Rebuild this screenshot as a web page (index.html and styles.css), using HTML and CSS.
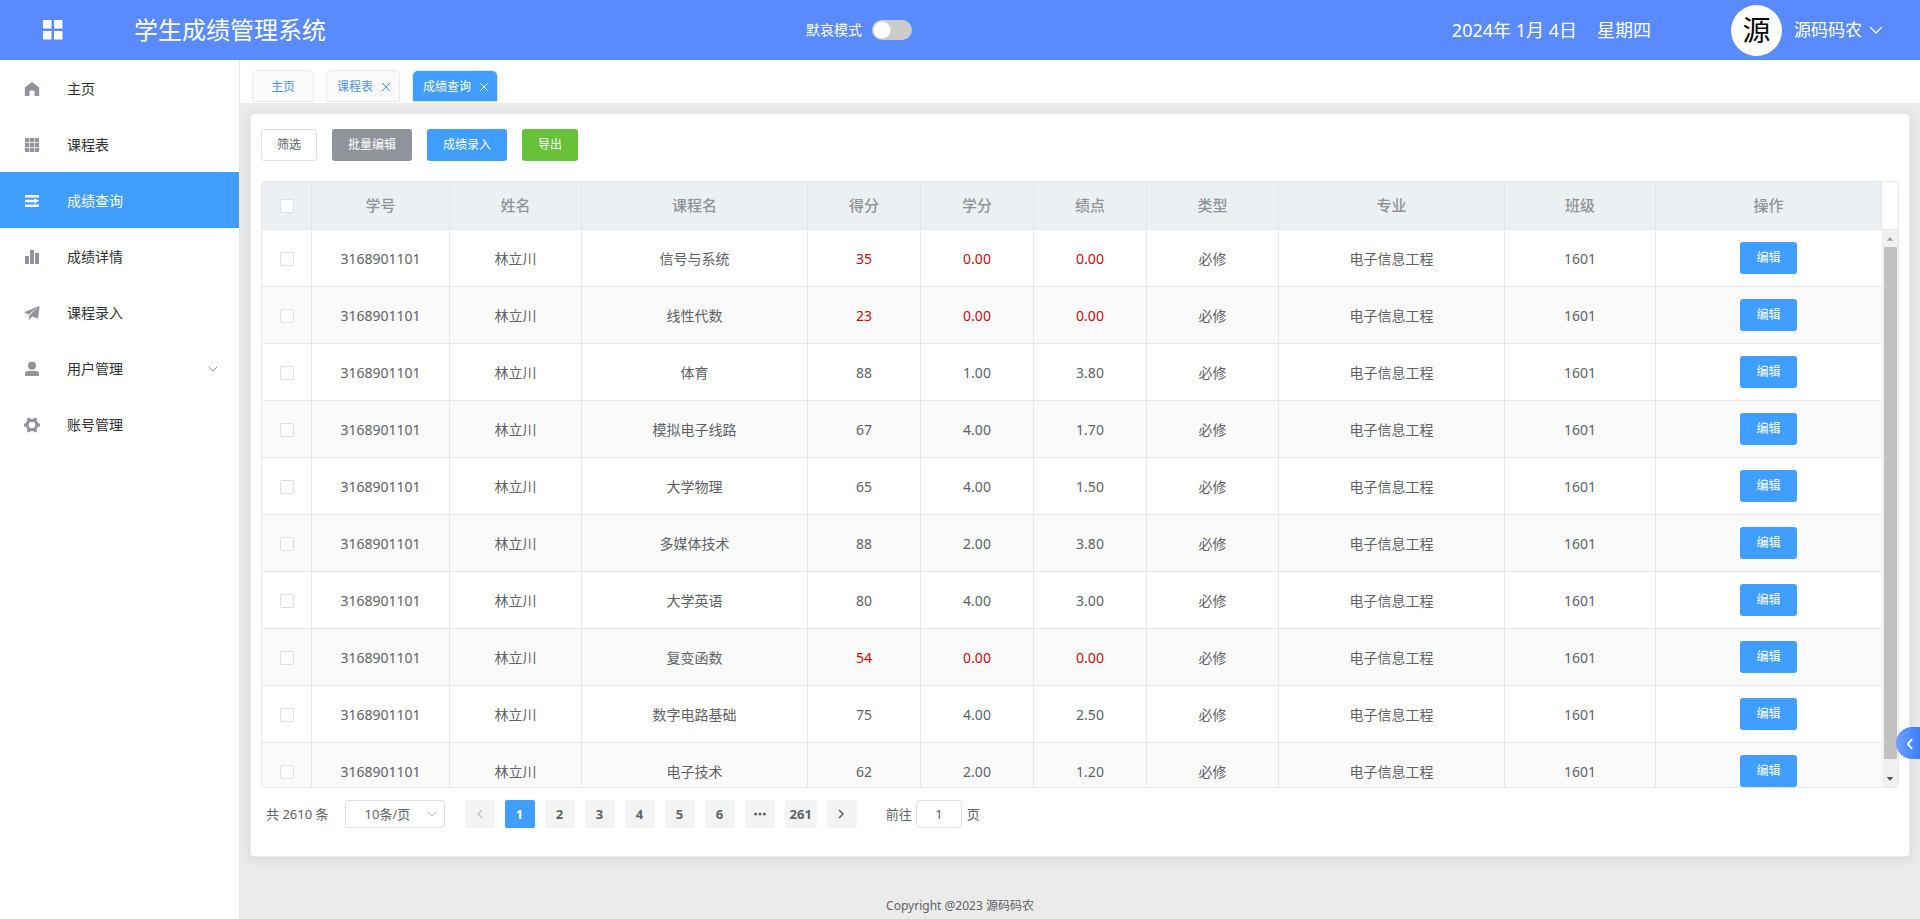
FILE: index.html
```
<!DOCTYPE html>
<html lang="zh-CN">
<head>
<meta charset="utf-8">
<title>学生成绩管理系统</title>
<link rel="stylesheet" href="styles.css">
</head>
<body>
<div class="app">
  <header class="topbar">
    <button class="icon-button menu-toggle" type="button" aria-label="菜单">
      <svg width="20" height="20" viewBox="0 0 20 20" fill="currentColor"><path d="M0 0h8.500v8.500H0zM11 0h8.500v8.500H11zM0 11h8.500v8.500H0zM11 11h8.500v8.500H11z"/></svg>
    </button>
    <h1 class="brand">学生成绩管理系统</h1>
    <label class="mode">默哀模式<input class="switch" type="checkbox" role="switch"></label>
    <div class="date"><span>2024年 1月 4日</span><span>星期四</span></div>
    <button class="icon-button user" type="button">
      <span class="avatar">源</span>
      <span class="user-name">源码码农</span>
      <svg width="14" height="8" viewBox="0 0 14 8" fill="none" stroke="currentColor" stroke-width="1.3"><path d="M1 1l6 6 6-6"/></svg>
    </button>
  </header>
  <div class="shell">
    <nav class="sidebar">
      <a class="nav-item" href="#"><svg class="nav-icon" viewBox="0 0 16 16"><path d="M8 .8L15.200 6.500V15H10.500V9.500h-5V15H.8V6.500z"/></svg>主页</a>
      <a class="nav-item" href="#"><svg class="nav-icon" viewBox="0 0 16 16"><path d="M1 1h4.200v4.200H1zM5.900 1h4.200v4.200H5.900zM10.800 1H15v4.200h-4.200zM1 5.900h4.200v4.200H1zM5.900 5.900h4.200v4.200H5.900zM10.800 5.900H15v4.200h-4.200zM1 10.800h4.200V15H1zM5.900 10.800h4.200V15H5.900zM10.800 10.800H15V15h-4.200z"/></svg>课程表</a>
      <a class="nav-item active" href="#"><svg class="nav-icon" viewBox="0 0 16 16"><path d="M1 2h14v2.400H1zM1 6.800h9.500V5.200l4.500 2.800-4.500 2.800V9.200H1zM1 11.600h14V14H1z"/></svg>成绩查询</a>
      <a class="nav-item" href="#"><svg class="nav-icon" viewBox="0 0 16 16"><path d="M1 7h4v8H1zM6 1h4v14H6zM11 4h4v11h-4z"/></svg>成绩详情</a>
      <a class="nav-item" href="#"><svg class="nav-icon" viewBox="0 0 16 16"><path d="M15.500 .8L.3 7.300l4.400 2.200zM15.500 .8L5.200 10.500V15.500l2.500-3.500zM15.500 .8L8 11.300l6 2.400z"/></svg>课程录入</a>
      <a class="nav-item" href="#"><svg class="nav-icon" viewBox="0 0 16 16"><circle cx="8" cy="4.700" r="4"/><path d="M1 15v-2a3 3 0 0 1 3-3h8a3 3 0 0 1 3 3v2z"/></svg>用户管理<svg class="nav-arrow" width="10" height="6" viewBox="0 0 10 6"><path d="M1 1l4 4 4-4"/></svg></a>
      <a class="nav-item" href="#"><svg class="nav-icon gear" viewBox="0 0 16 16"><circle cx="8" cy="8" r="4.800"/><path d="M0 8h2.500M13.500 8H16M4 1.100l1.200 2.100M10.800 12.800l1.200 2.100M12 1.100l-1.200 2.100M5.200 12.800L4 14.900"/></svg>账号管理</a>
    </nav>
    <main class="main">
      <div class="tabs">
        <a class="tab home" href="#">主页</a>
        <a class="tab" href="#">课程表<svg class="close" viewBox="0 0 8 8"><path d="M0 0l8 8M8 0L0 8"/></svg></a>
        <a class="tab active" href="#">成绩查询<svg class="close" viewBox="0 0 8 8"><path d="M0 0l8 8M8 0L0 8"/></svg></a>
      </div>
      <section class="card">
        <div class="toolbar">
          <button class="btn plain" type="button">筛选</button>
          <button class="btn info" type="button">批量编辑</button>
          <button class="btn primary" type="button">成绩录入</button>
          <button class="btn success" type="button">导出</button>
        </div>
        <div class="table-box">
          <div class="table-scroll">
            <table class="grades">
              <colgroup><col class="c-check"><col class="c-id"><col class="c-name"><col class="c-wide"><col class="c-num"><col class="c-num"><col class="c-num"><col class="c-name"><col class="c-wide"><col class="c-class"><col class="c-wide"></colgroup>
              <thead><tr><th><input class="tick" type="checkbox" aria-label="全选"></th><th>学号</th><th>姓名</th><th>课程名</th><th>得分</th><th>学分</th><th>绩点</th><th>类型</th><th>专业</th><th>班级</th><th>操作</th></tr></thead>
              <tbody id="rows"></tbody>
            </table>
          </div>
          <div class="scroll-side" aria-hidden="true">
            <div class="gutter"></div>
            <div class="track">
              <svg class="step" viewBox="0 0 17 17"><path fill="#a3a3a3" d="M5 11h7L8.500 7z"/></svg>
              <div class="thumb"></div>
              <svg class="step" viewBox="0 0 17 17"><path fill="#505050" d="M5 7h7l-3.500 4z"/></svg>
            </div>
          </div>
        </div>
        <div class="pagination">
          <span class="total">共 2610 条</span>
          <span class="size"><select aria-label="每页条数"><option>10条/页</option></select><svg width="10" height="6" viewBox="0 0 10 6"><path d="M1 1l4 4 4-4"/></svg></span>
          <div class="pager">
            <button type="button" aria-label="上一页" disabled><svg width="7" height="10" viewBox="0 0 7 10"><path d="M6 1L2 5l4 4"/></svg></button>
            <button type="button" class="current">1</button>
            <button type="button">2</button>
            <button type="button">3</button>
            <button type="button">4</button>
            <button type="button">5</button>
            <button type="button">6</button>
            <button type="button" aria-label="更多"><svg width="12" height="4" viewBox="0 0 12 4"><g class="dots"><circle cx="1.700" cy="2" r="1.500"/><circle cx="6" cy="2" r="1.500"/><circle cx="10.300" cy="2" r="1.500"/></g></svg></button>
            <button type="button">261</button>
            <button type="button" aria-label="下一页"><svg width="7" height="10" viewBox="0 0 7 10"><path d="M1 1l4 4-4 4"/></svg></button>
          </div>
          <label class="jump">前往<input type="text" value="1">页</label>
        </div>
      </section>
      <footer class="footer">Copyright @2023 源码码农</footer>
    </main>
  </div>
  <button class="drawer" type="button" aria-label="展开"><svg width="8" height="12" viewBox="0 0 8 12"><path d="M6 1L2 6l4 5"/></svg></button>
</div>
<script src="rows.js"></script>
</body>
</html>
```

FILE: styles.css
```
* { box-sizing: border-box; }

body {
  margin: 0;
  color: #606266;
  font: 14px/20px "Noto Sans", "Noto Sans CJK SC", sans-serif;
}

button, input, select { font-family: inherit; }
a { color: inherit; text-decoration: none; }

.app {
  display: flex;
  flex-direction: column;
  height: 100vh;
  overflow: hidden;
}

/* top bar */
.topbar {
  display: flex;
  align-items: center;
  flex: none;
  height: 60px;
  padding: 0 37px 0 43px;
  background: #598bff;
  color: #fff;
}
.icon-button {
  display: flex;
  align-items: center;
  padding: 0;
  border: 0;
  background: none;
  color: inherit;
  cursor: pointer;
}
.brand {
  margin: 0 0 0 71px;
  font-size: 24px;
  font-weight: 400;
  line-height: 32px;
}
.mode {
  display: flex;
  align-items: center;
  gap: 10px;
  margin: 0 auto;
  padding-right: 60px;
}
.switch {
  appearance: none;
  width: 40px;
  height: 20px;
  margin: 0;
  border-radius: 10px;
  background: radial-gradient(circle at 10px 10px, #fff 8px, #ccc 9px);
}
.date {
  display: flex;
  gap: 20px;
  margin-right: 80px;
  font-size: 18px;
}
.avatar {
  width: 51px;
  height: 51px;
  margin-right: 12px;
  border-radius: 50%;
  background: #fff;
  color: #000;
  font-size: 28px;
  line-height: 50px;
  text-align: center;
}
.user-name {
  margin-right: 7px;
  font-size: 17px;
  line-height: 20px;
}

/* frame */
.shell {
  display: flex;
  flex: 1;
  min-height: 0;
}
.sidebar {
  flex: none;
  width: 240px;
  border-right: 1px solid #e6e6e6;
  background: #fff;
}
.nav-item {
  display: flex;
  align-items: center;
  height: 56px;
  padding: 2px 21px 0 24px;
  color: #303133;
}
.nav-item.active {
  background: #409eff;
  color: #fff;
}
.nav-icon {
  width: 16px;
  height: 16px;
  margin-right: 27px;
  fill: #909399;
}
.nav-item.active .nav-icon { fill: #fff; }
.nav-icon.gear {
  fill: none;
  stroke: #909399;
  stroke-width: 3;
}
.nav-arrow {
  margin-left: auto;
  fill: none;
  stroke: #909399;
}
.main {
  display: flex;
  flex: 1;
  flex-direction: column;
  min-width: 0;
  background: #ebebeb;
}

/* open pages */
.tabs {
  display: flex;
  gap: 12px;
  flex: none;
  height: 43px;
  padding: 10px 12px 0;
  background: #fff;
}
.tab {
  display: flex;
  align-items: center;
  gap: 9px;
  height: 32px;
  padding: 2px 9px 0 10px;
  border: 1px solid #e8eaec;
  border-radius: 6px 6px 0 0;
  background: #fafafa;
  color: #4d94e8;
  font-size: 12px;
}
.tab.home { padding: 2px 18px 0; }
.tab.active {
  border-color: #d9ecff;
  background: #409eff;
  color: #fff;
}
.close {
  width: 8px;
  height: 8px;
  stroke: currentColor;
}

/* card */
.card {
  display: flex;
  flex: 1;
  flex-direction: column;
  min-height: 0;
  margin: 10px 10px 0;
  padding: 15px 10px 28px;
  border: 1px solid #ebeef5;
  border-radius: 4px;
  background: #fff;
  box-shadow: 0 2px 12px rgba(0, 0, 0, 0.1);
}
.toolbar {
  display: flex;
  gap: 15px;
  margin-bottom: 20px;
}
.btn {
  height: 32px;
  padding: 0 15px;
  border: 1px solid transparent;
  border-radius: 3px;
  color: #fff;
  font-size: 12px;
  line-height: 16px;
  cursor: pointer;
}
.btn.plain {
  border-color: #dcdfe6;
  background: #fff;
  color: #606266;
}
.btn.info { background: #909399; }
.btn.primary { background: #409eff; }
.btn.success { background: #67c23a; }

/* table */
.table-box {
  display: flex;
  flex: 1;
  min-height: 0;
  overflow: hidden;
  border: 1px solid #e6e8ec;
  border-radius: 4px;
}
.table-scroll {
  flex: 1;
  min-width: 0;
  overflow: auto;
  scrollbar-width: none;
}
.grades {
  width: 100%;
  border-spacing: 0;
  table-layout: fixed;
}
.c-check { width: 50px; }
.c-id { width: 138px; }
.c-name { width: 132px; }
.c-wide { width: 226px; }
.c-num { width: 113px; }
.c-class { width: 151px; }
.grades th, .grades td {
  padding: 0;
  border: solid #e6e6e6;
  border-width: 0 1px 1px 0;
  text-align: center;
}
.grades th {
  position: sticky;
  top: 0;
  height: 48px;
  padding-bottom: 2px;
  background: #edf0f3;
  color: #909399;
  font-size: 15px;
  font-weight: 500;
}
.grades th:first-child { padding-bottom: 0; }
.grades td {
  height: 57px;
  padding-top: 2px;
}
.grades td:last-child {
  padding-top: 0;
  border-right-color: transparent;
}
.grades tbody tr:nth-child(even) { background: #fafafa; }
.grades .fail { color: #c90a0a; }
.tick {
  appearance: none;
  display: block;
  width: 14px;
  height: 14px;
  margin: 0 auto;
  border: 1px solid #dcdfe6;
  border-radius: 2px;
  background: #fff;
}
.scroll-side {
  display: flex;
  flex: none;
  flex-direction: column;
  width: 16px;
}
.gutter {
  height: 48px;
  border-bottom: 1px solid #e6e6e6;
}
.track {
  display: flex;
  flex: 1;
  flex-direction: column;
  align-items: center;
  background: #f1f1f1;
}
.step {
  width: 16px;
  height: 17px;
}
.thumb {
  width: 13px;
  height: 92%;
  margin-bottom: auto;
  background: #c1c1c1;
}

/* pagination */
.pagination {
  display: flex;
  align-items: center;
  margin-top: 12px;
  padding-left: 5px;
  font-size: 13px;
}
.size {
  position: relative;
  width: 100px;
  height: 28px;
  margin: 0 20px 0 16px;
}
.size select {
  appearance: none;
  width: 100%;
  height: 28px;
  padding: 0 19px;
  border: 1px solid #dcdfe6;
  border-radius: 3px;
  background: #fff;
  color: #606266;
  font-size: 13px;
}
.size svg {
  position: absolute;
  top: 11px;
  right: 8px;
  fill: none;
  stroke: #c0c4cc;
}
.pager {
  display: flex;
  gap: 10px;
}
.pager button {
  display: flex;
  align-items: center;
  justify-content: center;
  min-width: 30px;
  height: 28px;
  padding: 0 5px;
  border: 0;
  border-radius: 2px;
  background: #f4f4f5;
  color: #606266;
  font-size: 13px;
  font-weight: 700;
}
.pager .current {
  background: #409eff;
  color: #fff;
}
.pager button:disabled { color: #c0c4cc; }
.pager svg {
  fill: none;
  stroke: currentColor;
  stroke-width: 1.5;
}
.pager .dots {
  fill: currentColor;
  stroke: none;
}
.jump {
  display: flex;
  align-items: center;
  margin-left: 29px;
}
.jump input {
  width: 46px;
  height: 28px;
  margin: 0 5px 0 4px;
  padding: 0;
  border: 1px solid #dcdfe6;
  border-radius: 4px;
  color: #606266;
  font-size: 13px;
  text-align: center;
}

.footer {
  flex: none;
  height: 62px;
  padding: 39px 240px 0 0;
  font-size: 12px;
  text-align: center;
}

/* side drawer handle */
.drawer {
  position: fixed;
  right: 0;
  bottom: 160px;
  width: 24px;
  height: 32px;
  padding: 4px 0 0 4px;
  border: 0;
  border-radius: 16px 0 0 16px;
  background: linear-gradient(90deg, #6ea2ff, #3a7dff);
}
.drawer svg {
  fill: none;
  stroke: #fff;
  stroke-width: 2;
}
```

FILE: rows.js
```
const courses = [
  ["信号与系统", 35, "0.00", "0.00"],
  ["线性代数", 23, "0.00", "0.00"],
  ["体育", 88, "1.00", "3.80"],
  ["模拟电子线路", 67, "4.00", "1.70"],
  ["大学物理", 65, "4.00", "1.50"],
  ["多媒体技术", 88, "2.00", "3.80"],
  ["大学英语", 80, "4.00", "3.00"],
  ["复变函数", 54, "0.00", "0.00"],
  ["数字电路基础", 75, "4.00", "2.50"],
  ["电子技术", 62, "2.00", "1.20"]
];

document.getElementById("rows").innerHTML = courses.map(([name, score, credit, point]) => {
  const mark = score < 60 ? ' class="fail"' : "";
  return `<tr><td><input class="tick" type="checkbox" aria-label="选择${name}"></td>
    <td>3168901101</td><td>林立川</td><td>${name}</td>
    <td${mark}>${score}</td><td${mark}>${credit}</td><td${mark}>${point}</td>
    <td>必修</td><td>电子信息工程</td><td>1601</td>
    <td><button class="btn primary" type="button">编辑</button></td></tr>`;
}).join("");
```
